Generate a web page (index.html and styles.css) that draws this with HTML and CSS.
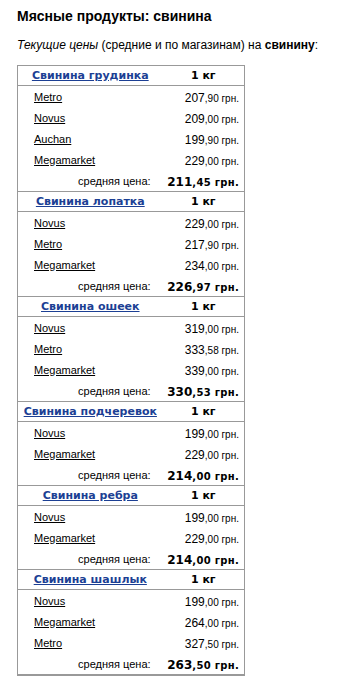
FILE: index.html
```html
<!DOCTYPE html>
<html lang="ru">
<head>
<meta charset="utf-8">
<title>Мясные продукты: свинина</title>
<link rel="stylesheet" href="styles.css">
</head>
<body>
<h1 class="title">Мясные продукты: свинина</h1>
<p class="intro"><em>Текущие цены</em> (средние и по магазинам) на <b>свинину</b>:</p>
<table class="prices">
<colgroup><col class="c-name"><col class="c-price"></colgroup>
<tbody>
<tr class="head"><th class="prod"><a href="#">Свинина грудинка</a></th><th class="unit">1 кг</th></tr>
<tr><td class="store"><a href="#">Metro</a></td><td class="price"><span class="big">207</span><span class="sm">,90 грн.</span></td></tr>
<tr><td class="store"><a href="#">Novus</a></td><td class="price"><span class="big">209</span><span class="sm">,00 грн.</span></td></tr>
<tr><td class="store"><a href="#">Auchan</a></td><td class="price"><span class="big">199</span><span class="sm">,90 грн.</span></td></tr>
<tr><td class="store"><a href="#">Megamarket</a></td><td class="price"><span class="big">229</span><span class="sm">,00 грн.</span></td></tr>
<tr class="avg"><td class="avg-label">средняя цена:</td><td class="avg-val"><span class="abig">211</span><span class="asm">,45 грн.</span></td></tr>
</tbody>
<tbody>
<tr class="head"><th class="prod"><a href="#">Свинина лопатка</a></th><th class="unit">1 кг</th></tr>
<tr><td class="store"><a href="#">Novus</a></td><td class="price"><span class="big">229</span><span class="sm">,00 грн.</span></td></tr>
<tr><td class="store"><a href="#">Metro</a></td><td class="price"><span class="big">217</span><span class="sm">,90 грн.</span></td></tr>
<tr><td class="store"><a href="#">Megamarket</a></td><td class="price"><span class="big">234</span><span class="sm">,00 грн.</span></td></tr>
<tr class="avg"><td class="avg-label">средняя цена:</td><td class="avg-val"><span class="abig">226</span><span class="asm">,97 грн.</span></td></tr>
</tbody>
<tbody>
<tr class="head"><th class="prod"><a href="#">Свинина ошеек</a></th><th class="unit">1 кг</th></tr>
<tr><td class="store"><a href="#">Novus</a></td><td class="price"><span class="big">319</span><span class="sm">,00 грн.</span></td></tr>
<tr><td class="store"><a href="#">Metro</a></td><td class="price"><span class="big">333</span><span class="sm">,58 грн.</span></td></tr>
<tr><td class="store"><a href="#">Megamarket</a></td><td class="price"><span class="big">339</span><span class="sm">,00 грн.</span></td></tr>
<tr class="avg"><td class="avg-label">средняя цена:</td><td class="avg-val"><span class="abig">330</span><span class="asm">,53 грн.</span></td></tr>
</tbody>
<tbody>
<tr class="head"><th class="prod"><a href="#">Свинина подчеревок</a></th><th class="unit">1 кг</th></tr>
<tr><td class="store"><a href="#">Novus</a></td><td class="price"><span class="big">199</span><span class="sm">,00 грн.</span></td></tr>
<tr><td class="store"><a href="#">Megamarket</a></td><td class="price"><span class="big">229</span><span class="sm">,00 грн.</span></td></tr>
<tr class="avg"><td class="avg-label">средняя цена:</td><td class="avg-val"><span class="abig">214</span><span class="asm">,00 грн.</span></td></tr>
</tbody>
<tbody>
<tr class="head"><th class="prod"><a href="#">Свинина ребра</a></th><th class="unit">1 кг</th></tr>
<tr><td class="store"><a href="#">Novus</a></td><td class="price"><span class="big">199</span><span class="sm">,00 грн.</span></td></tr>
<tr><td class="store"><a href="#">Megamarket</a></td><td class="price"><span class="big">229</span><span class="sm">,00 грн.</span></td></tr>
<tr class="avg"><td class="avg-label">средняя цена:</td><td class="avg-val"><span class="abig">214</span><span class="asm">,00 грн.</span></td></tr>
</tbody>
<tbody>
<tr class="head"><th class="prod"><a href="#">Свинина шашлык</a></th><th class="unit">1 кг</th></tr>
<tr><td class="store"><a href="#">Novus</a></td><td class="price"><span class="big">199</span><span class="sm">,00 грн.</span></td></tr>
<tr><td class="store"><a href="#">Megamarket</a></td><td class="price"><span class="big">264</span><span class="sm">,00 грн.</span></td></tr>
<tr><td class="store"><a href="#">Metro</a></td><td class="price"><span class="big">327</span><span class="sm">,50 грн.</span></td></tr>
<tr class="avg"><td class="avg-label">средняя цена:</td><td class="avg-val"><span class="abig">263</span><span class="asm">,50 грн.</span></td></tr>
</tbody>
</table>
</body>
</html>
```

FILE: styles.css
```css
body {
  margin: 0;
  padding: 7px 0 0 17px;
  background: #fff;
  color: #000;
  font-family: "Liberation Sans", Arial, sans-serif;
}

.title {
  margin: 0;
  font-size: 14px;
  line-height: 18px;
  font-weight: bold;
}

.intro {
  margin: 12px 0 12px;
  font-size: 12px;
  line-height: 16px;
  white-space: nowrap;
}

.prices {
  border-collapse: collapse;
  width: 228px;
  border: 1px solid #999;
  border-bottom-width: 2px;
}

.c-name { width: 146px; }
.c-price { width: 82px; }

.prices tbody {
  border-top: 1px solid #999;
}

.head th {
  height: 19px;
  padding: 0;
  border-bottom: 1px solid #999;
  font-family: "DejaVu Sans", Verdana, sans-serif;
  font-size: 11px;
  font-weight: bold;
  text-align: center;
  vertical-align: middle;
}

.prod a {
  color: #1c3f94;
  text-decoration: underline;
}

.prices td {
  height: 21px;
  padding: 0;
  vertical-align: middle;
}

.store {
  padding-left: 16px !important;
  font-size: 11px;
}

.store a {
  color: #000;
  text-decoration: underline;
}

.price {
  text-align: right;
  padding-right: 5px !important;
  white-space: nowrap;
}

.big { font-size: 12px; }
.sm { font-size: 10px; }

.avg-label {
  text-align: right;
  padding-right: 12px !important;
  font-size: 11px;
}

.avg-val {
  text-align: right;
  padding-right: 5px !important;
  white-space: nowrap;
  font-family: "DejaVu Sans", Verdana, sans-serif;
  font-weight: bold;
}

.abig { font-size: 12px; }
.asm { font-size: 10px; letter-spacing: 0.3px; }
```
